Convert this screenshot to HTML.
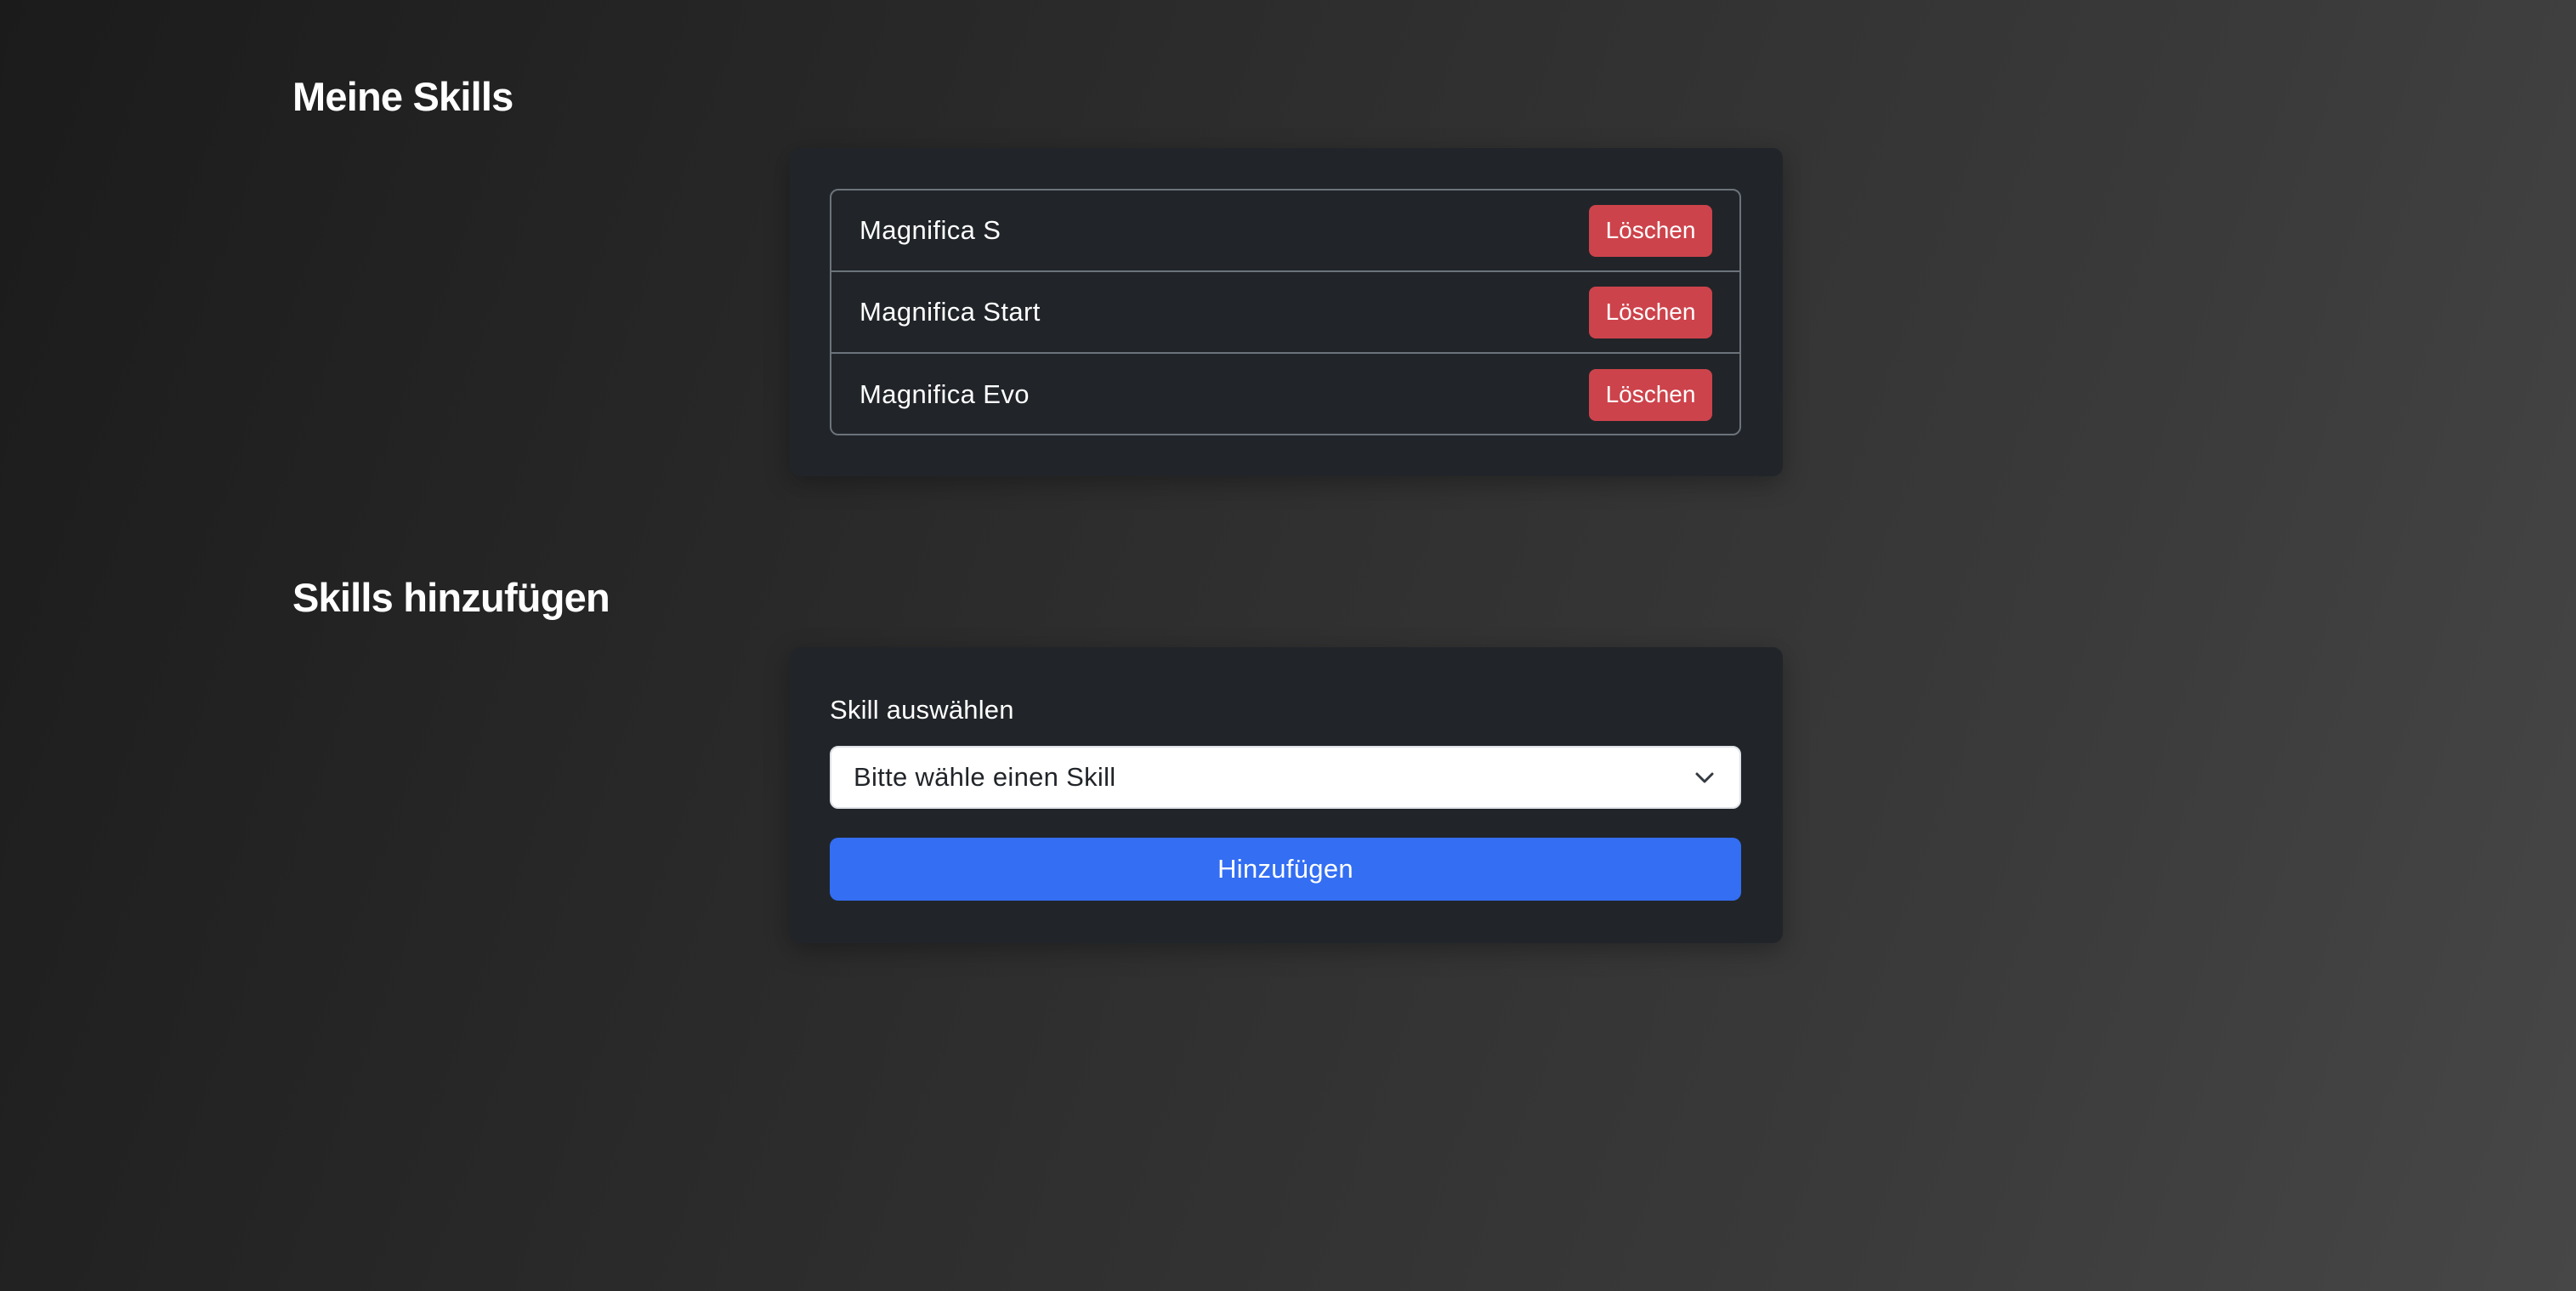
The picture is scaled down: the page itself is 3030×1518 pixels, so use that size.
<!DOCTYPE html>
<html><head><meta charset="utf-8"><style>
*{box-sizing:border-box;margin:0;padding:0}
body{width:3030px;height:1518px;overflow:hidden;font-family:"Liberation Sans",sans-serif;color:#fff;
background:linear-gradient(110deg,#1b1b1b 0%,#2e2e2e 45%,#3a3a3a 75%,#474747 100%);position:relative}
h2{position:absolute;left:344px;font-size:47px;font-weight:bold;letter-spacing:-0.8px}
.card{position:absolute;left:929px;width:1168px;background:#212529;border-radius:12px;box-shadow:0 8px 30px rgba(0,0,0,.3)}
.list{position:absolute;left:47px;top:48px;width:1072px;height:290px;border:2px solid #6c737b;border-radius:10px}
.row{height:96px;border-bottom:2px solid #6c737b;display:flex;align-items:center;justify-content:space-between;padding:0 32px 0 33px;font-size:31px;letter-spacing:0.4px}
.row:last-child{border-bottom:none}
.btn{background:#cd434b;color:#fff;font-size:28px;width:145px;height:61px;border-radius:8px;display:flex;align-items:center;justify-content:center;letter-spacing:0}
.lbl{position:absolute;left:47px;top:56px;font-size:31px;letter-spacing:0.2px}
.sel{position:absolute;left:47px;top:116px;width:1072px;height:74px;background:#fff;border:2px solid #dee2e6;border-radius:10px;color:#212529;font-size:31px;display:flex;align-items:center;padding-left:26px;letter-spacing:0.3px}
.sel svg{position:absolute;right:30px;top:27px}
.add{position:absolute;left:47px;top:224px;width:1072px;height:74px;background:#336ef3;border-radius:10px;font-size:31px;display:flex;align-items:center;justify-content:center;letter-spacing:0.3px}
</style></head><body>
<h2 style="top:86px">Meine Skills</h2>
<div class="card" style="top:174px;height:386px">
<div class="list">
<div class="row"><span>Magnifica S</span><div class="btn">Löschen</div></div>
<div class="row"><span>Magnifica Start</span><div class="btn">Löschen</div></div>
<div class="row"><span>Magnifica Evo</span><div class="btn">Löschen</div></div>
</div></div>
<h2 style="top:675px">Skills hinzufügen</h2>
<div class="card" style="top:761px;height:348px">
<div class="lbl">Skill auswählen</div>
<div class="sel">Bitte wähle einen Skill<svg width="22" height="16" viewBox="0 0 22 16"><path d="M2 4l9 9 9-9" fill="none" stroke="#343a40" stroke-width="3" stroke-linecap="round" stroke-linejoin="round"/></svg></div>
<div class="add">Hinzufügen</div>
</div>
</body></html>
